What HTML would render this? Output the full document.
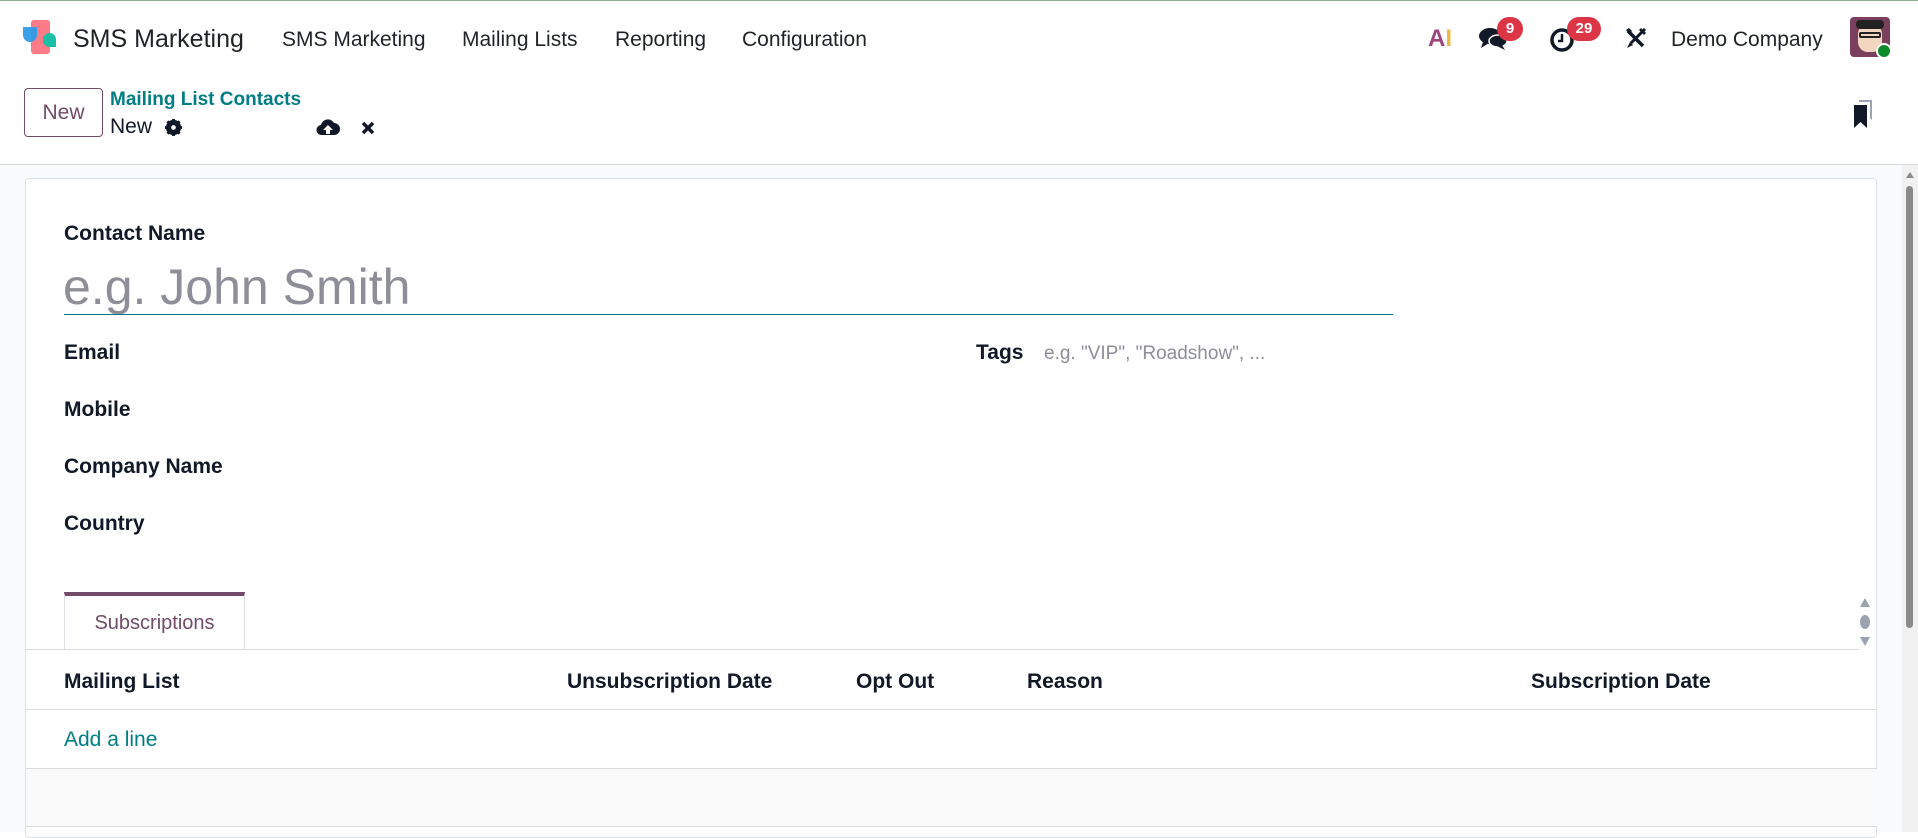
<!DOCTYPE html>
<html><head><meta charset="utf-8"><style>
*{box-sizing:border-box;margin:0;padding:0}
html,body{width:1918px;height:832px;overflow:hidden;background:#fff;font-family:"Liberation Sans",sans-serif;color:#111827}
.abs{position:absolute;white-space:nowrap}
.nav{font-size:21px;color:#1f2328}
.lbl{font-size:21px;font-weight:bold;color:#111827}
.badge{position:absolute;background:#dc3545;color:#fff;font-size:15px;font-weight:bold;border-radius:14px;height:24px;line-height:24px;text-align:center}
</style></head><body>
<div class="abs" style="left:0;top:0;width:1918px;height:1px;background:#8fae8f"></div>
<div class="abs" style="left:31px;top:20px;width:19px;height:34px;background:#fc7b86;border-radius:3px"></div>
<div class="abs" style="left:23px;top:27px;width:14px;height:15px;background:#2e9ce6;border-radius:0 0 8px 8px;opacity:.95"></div>
<div class="abs" style="left:43px;top:33px;width:13px;height:14px;background:#1bbfa6;border-radius:7px 7px 0 7px"></div>
<div class="abs" style="left:73px;top:25px;font-size:25px;color:#1f2328">SMS Marketing</div>
<div class="abs nav" style="left:282px;top:28px">SMS Marketing</div>
<div class="abs nav" style="left:462px;top:28px">Mailing Lists</div>
<div class="abs nav" style="left:615px;top:28px">Reporting</div>
<div class="abs nav" style="left:742px;top:28px">Configuration</div>
<div class="abs" style="left:1428px;top:25px;font-size:24px;font-weight:bold"><span style="color:#a0467f">A</span><span style="color:#f4b63c">I</span></div>
<svg class="abs" style="left:1478px;top:26px" width="30" height="26" viewBox="0 0 30 26"><ellipse cx="12" cy="10" rx="11" ry="8" fill="#111827"/><path d="M5 16 L3 22 L11 17Z" fill="#111827"/><ellipse cx="20" cy="15" rx="9" ry="6" fill="#111827" stroke="#fff" stroke-width="1.5"/><path d="M24 19 L27 24 L19 20Z" fill="#111827"/></svg>
<div class="badge" style="left:1497px;top:17px;width:26px">9</div>
<svg class="abs" style="left:1549px;top:27px" width="26" height="26" viewBox="0 0 26 26"><circle cx="13" cy="13" r="10" fill="none" stroke="#111827" stroke-width="3.5"/><path d="M13 7V14H9" fill="none" stroke="#111827" stroke-width="2.5"/></svg>
<div class="badge" style="left:1567px;top:17px;width:34px">29</div>
<svg class="abs" style="left:1625px;top:27px" width="22" height="22" viewBox="0 0 22 22"><path d="M3 4L18 19" stroke="#111827" stroke-width="3.5"/><path d="M1 3L4 1L7 4L4 7Z" fill="#111827"/><path d="M20 2L6 16" stroke="#111827" stroke-width="3"/><path d="M5 15L2 21L8 18Z" fill="#111827"/><path d="M16 1L21 6L19 8L14 3Z" fill="#111827"/></svg>
<div class="abs" style="left:1671px;top:28px;font-size:21px;color:#1f2328">Demo Company</div>
<div class="abs" style="left:1850px;top:17px;width:40px;height:40px;border-radius:4px;background:#7b3f5e"></div>
<div class="abs" style="left:1858px;top:24px;width:24px;height:28px;border-radius:10px;background:#f3d6c0"></div>
<div class="abs" style="left:1856px;top:20px;width:28px;height:9px;border-radius:4px;background:#222"></div>
<div class="abs" style="left:1859px;top:32px;width:22px;height:6px;border:2px solid #222;border-radius:2px"></div>
<div class="abs" style="left:1876px;top:43px;width:16px;height:16px;border-radius:50%;background:#0b8a2c;border:2px solid #fff"></div>
<div class="abs" style="left:24px;top:88px;width:79px;height:49px;border:1px solid #714b67;border-radius:4px;color:#714b67;font-size:21px;text-align:center;line-height:47px">New</div>
<div class="abs" style="left:110px;top:89px;font-size:19px;font-weight:bold;color:#017e84">Mailing List Contacts</div>
<div class="abs" style="left:110px;top:115px;font-size:21px;color:#111827">New</div>
<svg class="abs" style="left:164px;top:118px" width="19" height="19" viewBox="0 0 20 20"><circle cx="10" cy="10" r="6" fill="none" stroke="#111827" stroke-width="4"/><path d="M10 1V19M1 10H19M3.6 3.6L16.4 16.4M16.4 3.6L3.6 16.4" stroke="#111827" stroke-width="3"/><circle cx="10" cy="10" r="2.5" fill="#fff"/></svg>
<svg class="abs" style="left:316px;top:117px" width="24" height="20" viewBox="0 0 24 20"><path d="M6 18A5 5 0 0 1 5 8A7 7 0 0 1 18 6A6 6 0 0 1 18 18Z" fill="#111827"/><path d="M12 8L7 13H10V17H14V13H17Z" fill="#fff"/></svg>
<svg class="abs" style="left:361px;top:121px" width="14" height="14" viewBox="0 0 14 14"><path d="M2 2L12 12M12 2L2 12" stroke="#111827" stroke-width="3.5"/></svg>
<svg class="abs" style="left:1852px;top:98px" width="22" height="30" viewBox="0 0 22 30"><path d="M7 2H20V22L18 20V4H7Z" fill="#9ca3af"/><path d="M2 7H15V30L8.5 24L2 30Z" fill="#111827"/></svg>
<div class="abs" style="left:0;top:164px;width:1918px;height:668px;background:#f9fafb;border-top:1px solid #d8dadd"></div>
<div class="abs" style="left:25px;top:178px;width:1852px;height:660px;background:#fff;border:1px solid #dee2e6;border-radius:4px"></div>
<div class="abs lbl" style="left:64px;top:222px">Contact Name</div>
<div class="abs" style="left:63px;top:258px;font-size:50px;color:#8d8e98">e.g. John Smith</div>
<div class="abs" style="left:64px;top:314px;width:1329px;height:1px;background:#017e84"></div>
<div class="abs lbl" style="left:64px;top:341px">Email</div>
<div class="abs lbl" style="left:64px;top:398px">Mobile</div>
<div class="abs lbl" style="left:64px;top:455px">Company Name</div>
<div class="abs lbl" style="left:64px;top:512px">Country</div>
<div class="abs lbl" style="left:976px;top:341px">Tags</div>
<div class="abs" style="left:1044px;top:343px;font-size:19px;color:#8d8e98">e.g. "VIP", "Roadshow", ...</div>
<div class="abs" style="left:64px;top:592px;width:181px;height:58px;border:1px solid #dee2e6;border-top:4px solid #714b67;border-bottom:none;background:#fff;color:#714b67;font-size:20px;text-align:center;line-height:54px">Subscriptions</div>
<div class="abs" style="left:26px;top:649px;width:1833px;height:1px;background:#d8dadd"></div>
<div class="abs lbl" style="left:64px;top:670px">Mailing List</div>
<div class="abs lbl" style="left:567px;top:670px">Unsubscription Date</div>
<div class="abs lbl" style="left:856px;top:670px">Opt Out</div>
<div class="abs lbl" style="left:1027px;top:670px">Reason</div>
<div class="abs lbl" style="left:1531px;top:670px">Subscription Date</div>
<div class="abs" style="left:26px;top:709px;width:1851px;height:1px;background:#d8dadd"></div>
<div class="abs" style="left:64px;top:728px;font-size:21px;color:#017e84">Add a line</div>
<div class="abs" style="left:26px;top:768px;width:1851px;height:59px;background:#fafafa;border-top:1px solid #d8dadd;border-bottom:1px solid #d8dadd"></div>
<svg class="abs" style="left:1859px;top:598px" width="12" height="48" viewBox="0 0 12 48"><path d="M6 0L11 9H1Z" fill="#9ca3af"/><ellipse cx="6" cy="24" rx="5" ry="7" fill="#9ca3af"/><path d="M6 48L11 39H1Z" fill="#9ca3af"/></svg>
<div class="abs" style="left:1902px;top:165px;width:16px;height:667px;background:#f1f1f1"></div>
<div class="abs" style="left:1906px;top:172px;width:0;height:0;border-left:4px solid transparent;border-right:4px solid transparent;border-bottom:6px solid #8a8a8a"></div>
<div class="abs" style="left:1906px;top:186px;width:7px;height:442px;background:#8a8a8a;border-radius:4px"></div>
</body></html>
